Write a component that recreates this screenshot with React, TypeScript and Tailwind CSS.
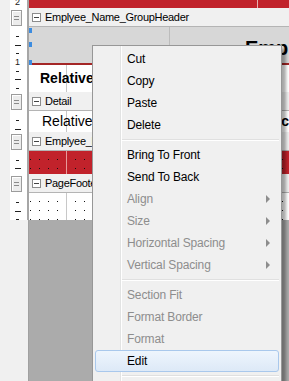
import React from "react";

type Tick = { y: number; kind: "s" | "l" | string };
type MenuItem = { label: string; disabled?: boolean; sub?: boolean; active?: boolean } | "sep";

const menuItems: MenuItem[] = [
  { label: "Cut" },
  { label: "Copy" },
  { label: "Paste" },
  { label: "Delete" },
  "sep",
  { label: "Bring To Front" },
  { label: "Send To Back" },
  { label: "Align", disabled: true, sub: true },
  { label: "Size", disabled: true, sub: true },
  { label: "Horizontal Spacing", disabled: true, sub: true },
  { label: "Vertical Spacing", disabled: true, sub: true },
  "sep",
  { label: "Section Fit", disabled: true },
  { label: "Format Border", disabled: true },
  { label: "Format", disabled: true },
  { label: "Edit", active: true },
  "sep",
  { label: "Properties" },
];

// ─── Ruler column for a band ────────────────────────────────────────────────
const Ruler = ({ h, ticks }: { h: number; ticks: Tick[] }) => (
  <div className="flex w-[29px] shrink-0">
    <div className="w-[10px] bg-[#f0f0f0]" />
    <div className="w-[17px] bg-white">
      <svg width="17" height={h} className="block">
        {ticks.map((t, i) =>
          t.kind === "s" ? (
            <rect key={i} x="6" y={t.y} width="3" height="1" fill="#202020" />
          ) : t.kind === "l" ? (
            <rect key={i} x="5" y={t.y} width="6" height="1" fill="#202020" />
          ) : (
            <text key={i} x="7.5" y={t.y + 3} fontSize="9" textAnchor="middle" fill="#202020" fontFamily="Liberation Sans, sans-serif">
              {t.kind}
            </text>
          )
        )}
      </svg>
    </div>
    <div className="w-[2px] bg-[#a6a6a6]" />
  </div>
);

// ─── Section header bar (⊟ Name) ────────────────────────────────────────────
const SectionHeader = ({ title }: { title: string }) => (
  <div className="flex h-[19px] shrink-0">
    <div className="flex w-[29px] shrink-0">
      <div className="w-[10px] bg-[#f0f0f0]" />
      <div className="flex w-[17px] items-center bg-white pl-[1px]">
        <div className="flex h-[16px] w-[11px] flex-col items-center justify-center gap-[2px] border border-[#9c9c9c] bg-[#ececec] shadow-[inset_1px_1px_0_#ffffff]">
          <div className="h-[1px] w-[5px] bg-[#8a8a8a]" />
          <div className="h-[1px] w-[5px] bg-[#8a8a8a]" />
        </div>
      </div>
      <div className="w-[2px] bg-[#a6a6a6]" />
    </div>
    <div className="flex flex-1 items-center gap-[4px] overflow-hidden border-b border-[#b4b4b4] bg-[#f0f0f0] pl-[3px]">
      <div className="flex h-[9px] w-[9px] shrink-0 items-center justify-center border border-[#8c8c8c] bg-white">
        <div className="h-[1px] w-[5px] bg-[#444]" />
      </div>
      <span className="whitespace-nowrap text-[11px] tracking-[-0.3px] text-black">{title}</span>
    </div>
  </div>
);

const dots =
  "bg-[radial-gradient(circle,#111_0.7px,transparent_1px)] bg-[length:9px_9px] bg-[position:6px_4px]";

// ─── Context menu ───────────────────────────────────────────────────────────
const ContextMenu = () => (
  <div className="absolute left-[92px] top-[45px] w-[190px] border border-[#979797] bg-[#f0f0f0] p-[2px] font-['Liberation_Sans',Arial,sans-serif] text-[12px] shadow-[4px_4px_3px_rgba(0,0,0,0.35)]">
    <div className="absolute bottom-0 left-[27px] top-0 w-[1px] bg-[#e2e3e3]" />
    <div className="absolute bottom-0 left-[28px] top-0 w-[1px] bg-white" />
    {menuItems.map((it, i) =>
      it === "sep" ? (
        <div key={i} className="relative flex h-[8px] flex-col justify-center pl-[27px]">
          <div className="h-[1px] bg-[#e0e0e0]" />
          <div className="h-[1px] bg-white" />
        </div>
      ) : (
        <div
          key={i}
          className={`relative flex h-[22px] items-center justify-between rounded-[3px] border pl-[31px] pr-[8px] ${
            it.active
              ? "border-[#a9c8ec] bg-[linear-gradient(#eef5fd,#dde9f7)]"
              : "border-transparent"
          } ${it.disabled ? "text-[#8d8d8d]" : "text-black"}`}
        >
          <span className="whitespace-nowrap tracking-[-0.15px]">{it.label}</span>
          {it.sub && (
            <div className="h-0 w-0 border-y-[4px] border-l-[4px] border-y-transparent border-l-[#8d8d8d]" />
          )}
        </div>
      )
    )}
  </div>
);

const App: React.FC = () => {
  return (
    <div className="relative h-[381px] w-[289px] overflow-hidden bg-[#f0f0f0] font-['Liberation_Sans',Arial,sans-serif]">
      <div className="flex h-full flex-col">
        {/* tail of the band above */}
        <div className="flex h-[8px] shrink-0">
          <Ruler h={8} ticks={[{ y: 2, kind: "2" }]} />
          <div className="flex flex-1 bg-[#c1222b]">
            <div className="w-[228px]" />
            <div className="w-[1px] bg-[#e6b0b0]" />
          </div>
        </div>

        <SectionHeader title="Emplyee_Name_GroupHeader" />

        {/* group header band */}
        <div className="flex h-[65px] shrink-0">
          <Ruler
            h={65}
            ticks={[
              { y: 9, kind: "s" },
              { y: 18, kind: "l" },
              { y: 26, kind: "s" },
              { y: 35, kind: "1" },
              { y: 44, kind: "s" },
              { y: 52, kind: "l" },
              { y: 61, kind: "s" },
            ]}
          />
          <div className="relative flex flex-1 flex-col">
            <div className="flex h-[36px] bg-[#d7d7d7]">
              <div className="w-[141px] border-r border-[#bcbcbc]" />
              <div className="flex-1 overflow-hidden whitespace-nowrap pl-[75px] pt-[6px] text-[20px] font-bold text-black">
                Emplyee Name
              </div>
            </div>
            <div className="h-[2px] bg-[#a42626]" />
            <div className="flex flex-1 bg-white">
              <div className="flex w-[38px] items-center border-r border-[#c8c8c8] pl-[11px]">
                <span className="whitespace-nowrap text-[14px] font-bold">Relative</span>
              </div>
              <div className="flex flex-1 items-center justify-end overflow-hidden whitespace-nowrap text-[14px] font-bold">
                Graphic
              </div>
            </div>
            <div className="absolute left-0 top-[1px] h-[5px] w-[3px] bg-[#3c8ce0]" />
            <div className="absolute left-0 top-[15px] h-[5px] w-[3px] bg-[#3c8ce0]" />
            <div className="absolute left-0 top-[33px] h-[5px] w-[3px] bg-[#3c8ce0]" />
          </div>
        </div>

        <SectionHeader title="Detail" />

        {/* detail band */}
        <div className="flex h-[21px] shrink-0">
          <Ruler h={21} ticks={[{ y: 9, kind: "s" }, { y: 18, kind: "l" }]} />
          <div className="flex flex-1 bg-white">
            <div className="flex w-[38px] items-center border-r border-[#c8c8c8] pl-[13px]">
              <span className="whitespace-nowrap text-[14px]">Relative</span>
            </div>
            <div className="flex flex-1 items-center justify-end overflow-hidden whitespace-nowrap text-[14px] font-bold">
              Graphic
            </div>
          </div>
        </div>

        <SectionHeader title="Emplyee_Name_GroupFooter" />

        {/* group footer band */}
        <div className="flex h-[23px] shrink-0">
          <Ruler h={23} ticks={[{ y: 9, kind: "s" }, { y: 17, kind: "l" }]} />
          <div className={`flex flex-1 bg-[#c1222b] ${dots}`}>
            <div className="w-[38px] border-r border-[#e79a9a]" />
          </div>
        </div>

        <SectionHeader title="PageFooter" />

        {/* page footer band */}
        <div className="flex h-[27px] shrink-0">
          <Ruler h={27} ticks={[{ y: 9, kind: "s" }, { y: 18, kind: "l" }, { y: 26, kind: "s" }]} />
          <div className={`flex flex-1 bg-white ${dots}`}>
            <div className="w-[38px] border-r border-[#c8c8c8]" />
          </div>
        </div>

        {/* empty workspace */}
        <div className="flex flex-1">
          <div className="w-[28px] bg-[#f0f0f0]" />
          <div className="w-[1px] bg-[#a0a0a0]" />
          <div className="flex-1 bg-[#ababab]" />
        </div>
      </div>

      <ContextMenu />
    </div>
  );
};

export default App;
